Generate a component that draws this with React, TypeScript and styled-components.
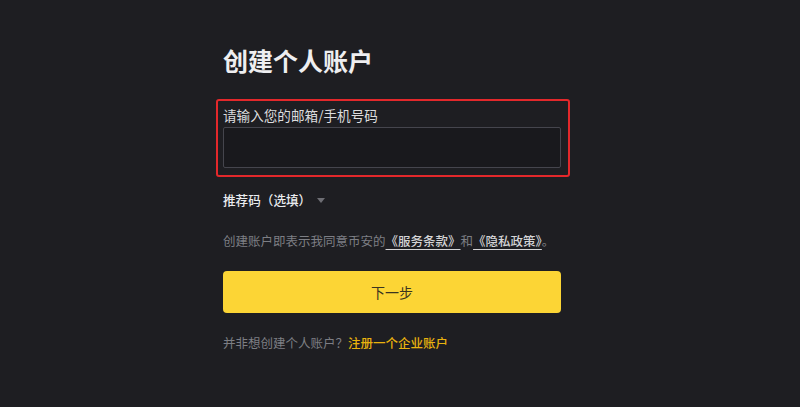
import React from "react";
import styled, { createGlobalStyle } from "styled-components";

const GlobalStyle = createGlobalStyle`
  html, body {
    margin: 0;
    padding: 0;
    background-color: #1e1e22;
  }
  body {
    font-family: "Noto Sans CJK SC", "Noto Sans", sans-serif;
  }
`;

const Page = styled.div`
  width: 800px;
  height: 407px;
  display: flex;
  justify-content: center;
  padding: 44px 16px 0 0;
  box-sizing: border-box;
  background-color: #1e1e22;
  overflow: hidden;
`;

const Form = styled.div`
  width: 338px;
  display: flex;
  flex-direction: column;
`;

const Title = styled.h1`
  margin: 0;
  font-size: 25px;
  line-height: 32px;
  font-weight: 700;
  color: #eeeef0;
`;

const Field = styled.div`
  position: relative;
  margin-top: 30px;
  display: flex;
  flex-direction: column;
`;

const Highlight = styled.div`
  position: absolute;
  top: -7px;
  left: -7px;
  right: -9px;
  bottom: -9px;
  border: 2px solid #e3282b;
  border-radius: 3px;
  pointer-events: none;
`;

const Label = styled.label`
  font-size: 13.6px;
  line-height: 18px;
  color: #dcdcde;
`;

const Input = styled.input`
  margin-top: 3px;
  height: 41px;
  box-sizing: border-box;
  background-color: #19191d;
  border: 1px solid #45454d;
  border-radius: 2px;
  outline: none;
  color: #eaecef;
  padding: 0 10px;
  font-family: inherit;
  font-size: 14px;
`;

const Referral = styled.div`
  margin-top: 23px;
  display: flex;
  align-items: center;
  font-size: 12.6px;
  line-height: 18px;
  font-weight: 500;
  color: #eaecef;
`;

const Caret = styled.span`
  margin-left: 6px;
  width: 0;
  height: 0;
  border-left: 4px solid transparent;
  border-right: 4px solid transparent;
  border-top: 5px solid #6e6e74;
`;

const Terms = styled.p`
  margin: 23px 0 0;
  font-size: 12.5px;
  line-height: 18px;
  color: #7d7e84;
`;

const TermsLink = styled.a`
  color: #d4d4d6;
  font-weight: 500;
  text-decoration: underline;
  text-underline-offset: 3px;
`;

const NextButton = styled.button`
  margin-top: 21px;
  height: 42px;
  border: none;
  border-radius: 4px;
  background-color: #fcd535;
  color: #3a3420;
  font-family: inherit;
  font-size: 14px;
  cursor: pointer;
`;

const Footer = styled.p`
  margin: 21px 0 0;
  font-size: 12.5px;
  line-height: 18px;
  color: #7d7e84;
`;

const YellowLink = styled.a`
  color: #e9b20e;
  font-weight: 500;
  text-decoration: none;
`;

function App() {
  return (
    <>
      <GlobalStyle />
      <Page>
        <Form>
          <Title>创建个人账户</Title>
          <Field>
            <Highlight />
            <Label>请输入您的邮箱/手机号码</Label>
            <Input type="text" />
          </Field>
          <Referral>
            推荐码（选填）
            <Caret />
          </Referral>
          <Terms>
            创建账户即表示我同意币安的<TermsLink>《服务条款》</TermsLink>和
            <TermsLink>《隐私政策》</TermsLink>。
          </Terms>
          <NextButton>下一步</NextButton>
          <Footer>
            并非想创建个人账户？<YellowLink>注册一个企业账户</YellowLink>
          </Footer>
        </Form>
      </Page>
    </>
  );
}

export default App;
